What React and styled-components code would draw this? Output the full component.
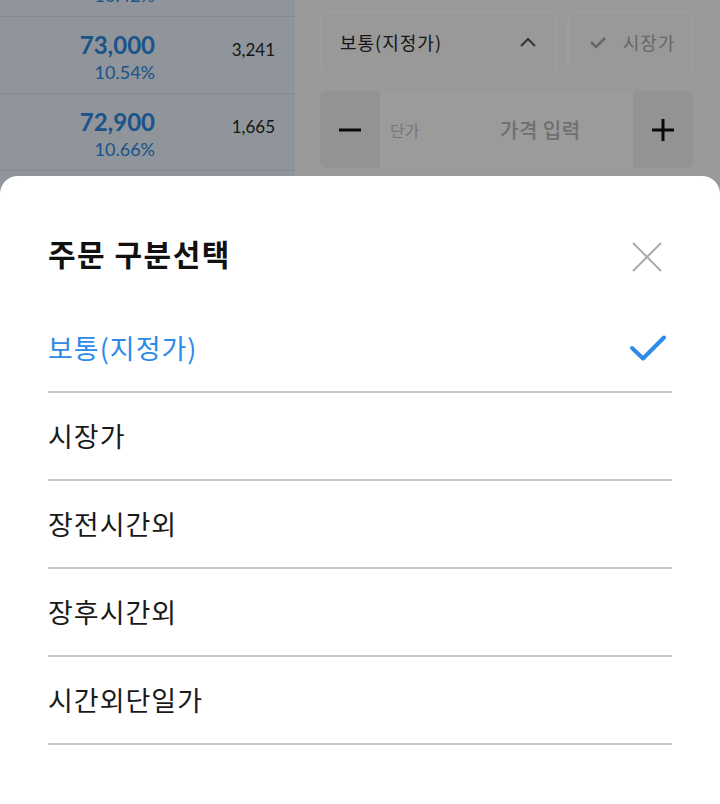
import React from 'react';
import styled, { createGlobalStyle } from 'styled-components';


const GlobalStyle = createGlobalStyle`
	html, body {
		margin: 0;
		padding: 0;
		height: 804px;
		overflow: hidden;
		background: #f7f7f7;
	}

	body {
		font-family: "Noto Sans CJK KR", "Noto Sans", sans-serif;
	}
`;

const Page = styled.div`
	display: flex;
	height: 804px;
	overflow: hidden;
`;

const Quotes = styled.div`
	width: 295px;
	flex-shrink: 0;
	background: #e7f0f9;
	border-right: 1px solid #fafafa;
	margin-top: -60px;
`;

const QuoteRow = styled.div`
	display: flex;
	height: 76px;
	border-bottom: 1px solid #d6dde5;
	font-family: Lato, "Noto Sans", sans-serif;
`;

const PriceCell = styled.div`
	width: 155px;
	display: flex;
	flex-direction: column;
	align-items: flex-end;
	padding-top: 12px;
	color: #2d86e0;
`;

const Price = styled.span`
	font-size: 24px;
	font-weight: 700;
	line-height: 32px;
`;

const Rate = styled.span`
	font-size: 18px;
	line-height: 22px;
`;

const VolumeCell = styled.div`
	width: 120px;
	text-align: right;
	padding-top: 22px;
	font-size: 17px;
	line-height: 22px;
	color: #262626;
`;

const OrderPanel = styled.div`
	flex: 1;
	padding: 11px 27px 0 24px;
	display: flex;
	flex-direction: column;
	gap: 18px;
`;

const TypeRow = styled.div`
	display: flex;
	gap: 10px;
`;

const SelectBox = styled.div`
	width: 237px;
	height: 62px;
	box-sizing: border-box;
	border: 2px solid #fdfdfd;
	border-radius: 7px;
	display: flex;
	align-items: center;
	justify-content: space-between;
	padding: 0 18px 0 18px;
	font-size: 18px;
	letter-spacing: 1px;
	color: #262626;
`;

const MarketButton = styled.div`
	flex: 1;
	height: 62px;
	box-sizing: border-box;
	border: 2px solid #fdfdfd;
	border-radius: 7px;
	display: flex;
	align-items: center;
	justify-content: center;
	gap: 16px;
	font-size: 18px;
	letter-spacing: 1px;
	color: #a6a6a6;
	padding-left: 4px;
`;

const PriceBox = styled.div`
	height: 77px;
	border-radius: 7px;
	display: flex;
	overflow: hidden;
	background: #eeeeee;
`;

const StepButton = styled.div`
	width: 60px;
	display: flex;
	align-items: center;
	justify-content: center;
	color: #111;
`;

const PriceInput = styled.div`
	flex: 1;
	background: #fafafa;
	display: flex;
	align-items: center;
	padding-left: 10px;
`;

const InputLabel = styled.span`
	font-size: 16px;
	color: #c2c2c2;
	width: 110px;
`;

const Placeholder = styled.span`
	font-size: 20px;
	font-weight: 500;
	letter-spacing: 0.5px;
	color: #b3b3b3;
`;

const Dim = styled.div`
	position: fixed;
	inset: 0;
	background: rgba(0, 0, 0, 0.38);
`;

const Sheet = styled.div`
	position: fixed;
	left: 0;
	right: 0;
	top: 176px;
	bottom: 0;
	background: #ffffff;
	border-radius: 18px 18px 0 0;
	padding: 0 48px;
`;

const SheetHeader = styled.div`
	display: flex;
	align-items: center;
	justify-content: space-between;
	padding: 50px 0 25px;
	height: 54px;
`;

const SheetTitle = styled.h2`
	margin: 0;
	font-size: 30px;
	font-weight: 700;
	letter-spacing: 1.5px;
	line-height: 54px;
	color: #111;
`;

const CloseIcon = styled.svg`
	margin-right: 9px;
	margin-top: 8px;
`;

const OptionList = styled.ul`
	list-style: none;
	margin: 0;
	padding: 0;
`;

const Option = styled.li`
	height: 86px;
	border-bottom: 2px solid #c9c9c9;
	display: flex;
	align-items: center;
	justify-content: space-between;
	font-size: 27px;
	letter-spacing: 1px;
	line-height: 36px;
	color: ${props => (props.$selected ? '#2d8ae8' : '#1a1a1a')};
`;

const CheckIcon = styled.svg`
	margin-right: 4px;
`;


const quotes = [
	{ price: '73,100', rate: '10.42%', volume: '2,110' },
	{ price: '73,000', rate: '10.54%', volume: '3,241' },
	{ price: '72,900', rate: '10.66%', volume: '1,665' },
	{ price: '72,800', rate: '10.78%', volume: '904' },
];

const orderTypes = ['보통(지정가)', '시장가', '장전시간외', '장후시간외', '시간외단일가'];


const App = () => {
	const selected = orderTypes[0];

	return (
		<>
			<GlobalStyle />
			<Page>
				<Quotes>
					{quotes.map(q => (
						<QuoteRow key={q.price}>
							<PriceCell>
								<Price>{q.price}</Price>
								<Rate>{q.rate}</Rate>
							</PriceCell>
							<VolumeCell>{q.volume}</VolumeCell>
						</QuoteRow>
					))}
				</Quotes>
				<OrderPanel>
					<TypeRow>
						<SelectBox>
							<span>보통(지정가)</span>
							<svg width="18" height="12" viewBox="0 0 18 12">
								<path d="M2 10 L9 3 L16 10" fill="none" stroke="#555" strokeWidth="2" />
							</svg>
						</SelectBox>
						<MarketButton>
							<svg width="18" height="14" viewBox="0 0 18 14">
								<path d="M2 7 L7 12 L16 3" fill="none" stroke="#a6a6a6" strokeWidth="2.5" />
							</svg>
							<span>시장가</span>
						</MarketButton>
					</TypeRow>
					<PriceBox>
						<StepButton>
							<svg width="22" height="4" viewBox="0 0 22 4">
								<rect width="22" height="3" y="0.5" fill="#111" />
							</svg>
						</StepButton>
						<PriceInput>
							<InputLabel>단가</InputLabel>
							<Placeholder>가격 입력</Placeholder>
						</PriceInput>
						<StepButton>
							<svg width="22" height="22" viewBox="0 0 22 22">
								<rect x="0" y="9.5" width="22" height="3" fill="#111" />
								<rect x="9.5" y="0" width="3" height="22" fill="#111" />
							</svg>
						</StepButton>
					</PriceBox>
				</OrderPanel>
			</Page>

			<Dim />

			<Sheet>
				<SheetHeader>
					<SheetTitle>주문 구분선택</SheetTitle>
					<CloseIcon width="32" height="32" viewBox="0 0 32 32">
						<path d="M2 2 L30 30 M30 2 L2 30" stroke="#ababab" strokeWidth="2" fill="none" />
					</CloseIcon>
				</SheetHeader>
				<OptionList>
					{orderTypes.map(type => (
						<Option key={type} $selected={type === selected}>
							<span>{type}</span>
							{type === selected && (
								<CheckIcon width="40" height="30" viewBox="0 0 40 30">
									<path d="M4 15 L15 25.5 L36 4.5" fill="none" stroke="#2d8ae8" strokeWidth="4" strokeLinecap="round" strokeLinejoin="round" />
								</CheckIcon>
							)}
						</Option>
					))}
				</OptionList>
			</Sheet>
		</>
	);
};


export default App;
